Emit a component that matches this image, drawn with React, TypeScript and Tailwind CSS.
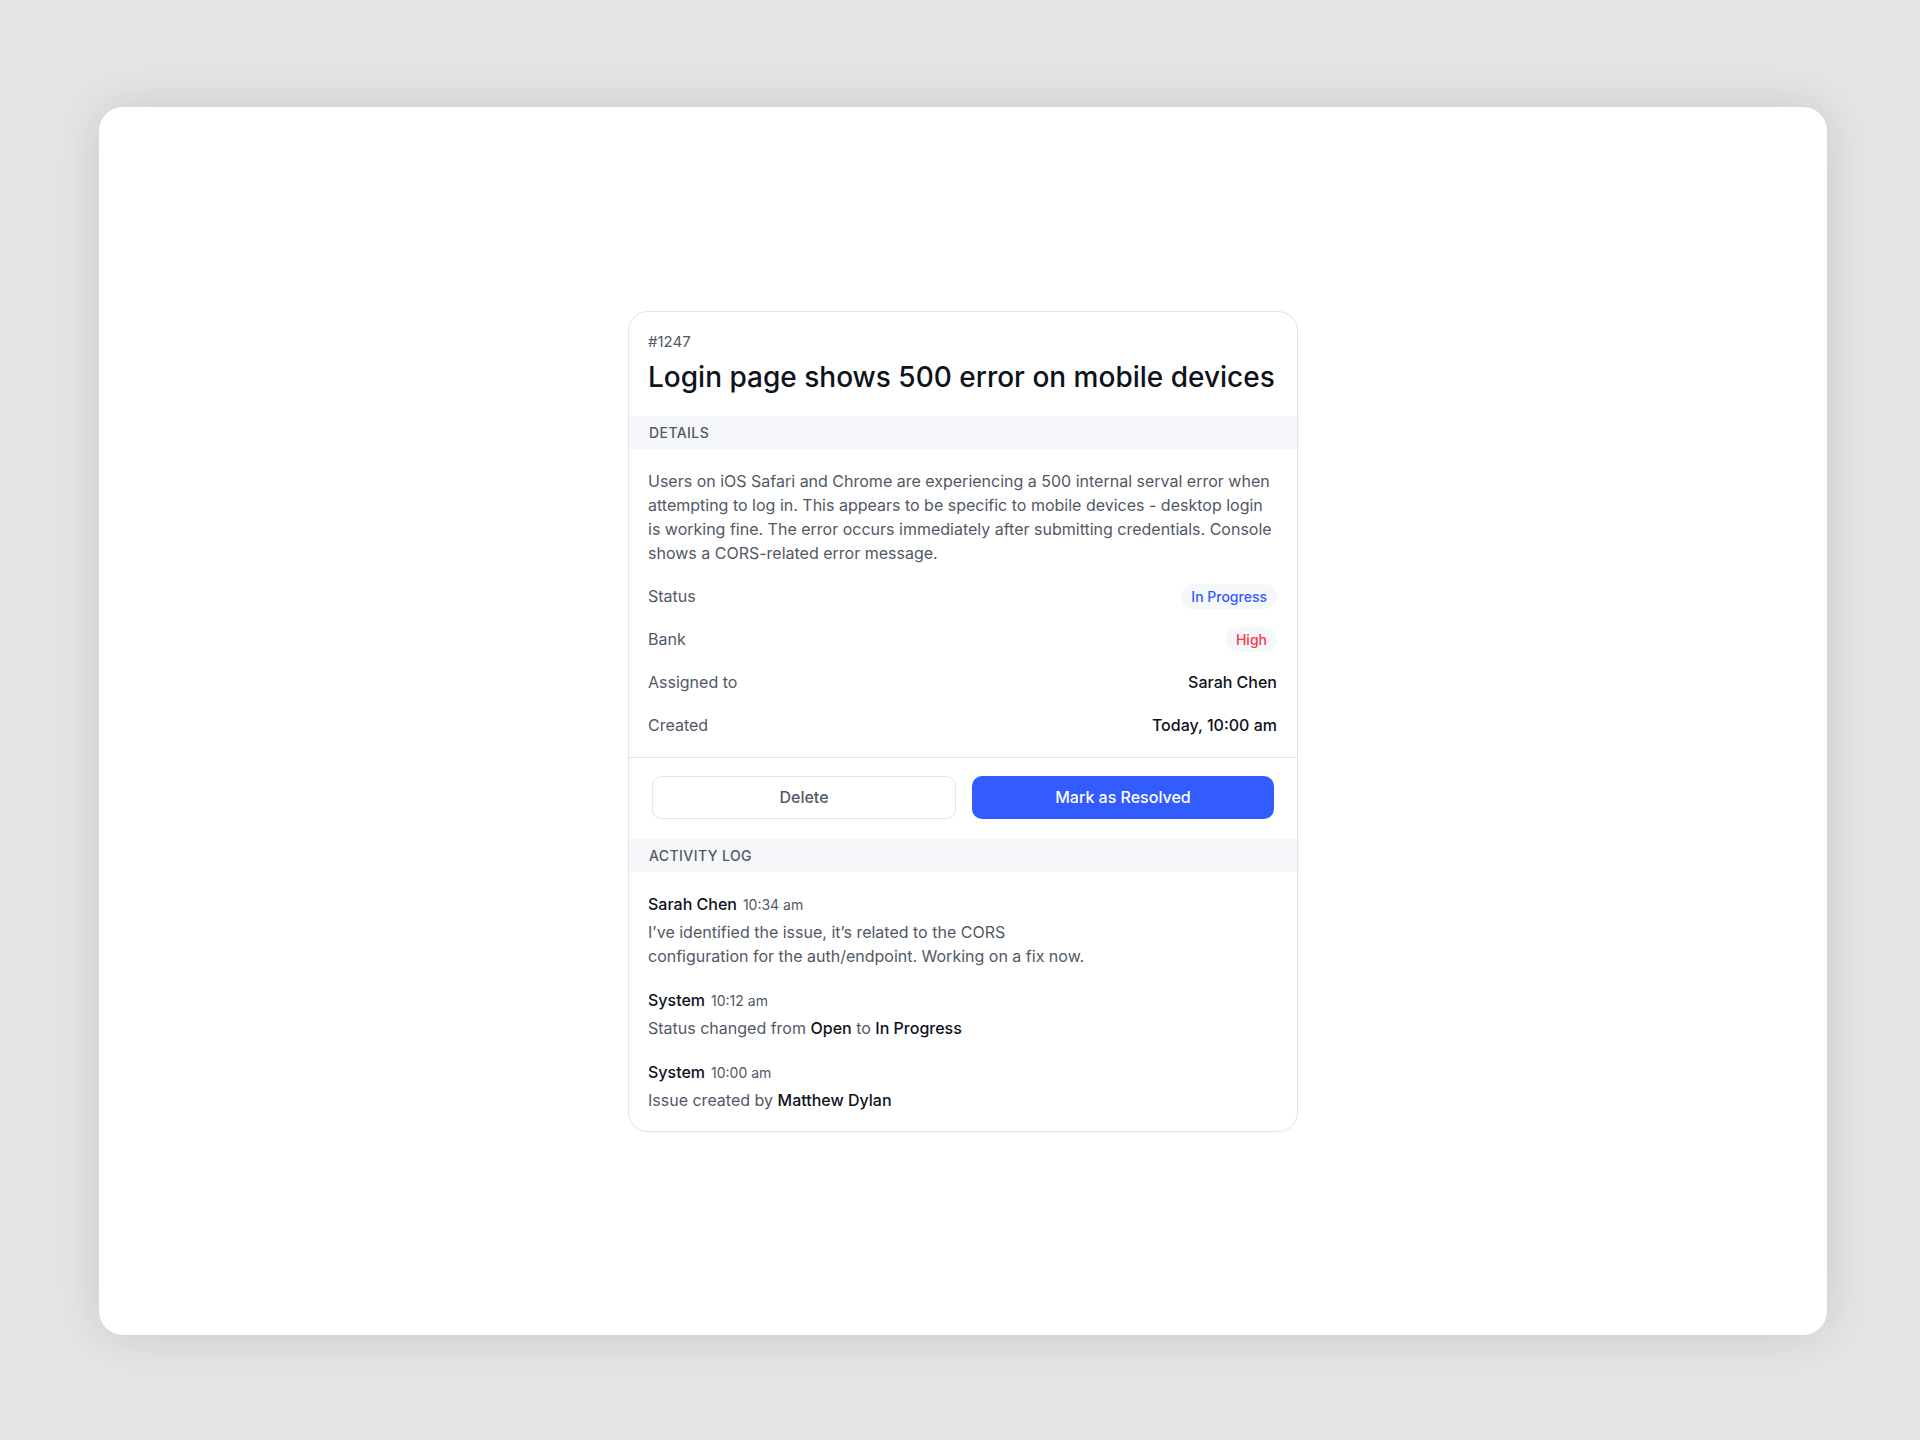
import React from "react";

const font = { fontFamily: "Inter, 'Noto Sans', sans-serif" };

function Row({ label, children }: { label: string; children: React.ReactNode }) {
  return (
    <div className="flex h-[43px] items-center justify-between">
      <span className="text-[16px] text-[#525866]">{label}</span>
      {children}
    </div>
  );
}

function Band({ children }: { children: React.ReactNode }) {
  return (
    <div className="flex h-[33px] items-center bg-[#F5F7FA] px-5 text-[14px] font-medium uppercase tracking-[0.03em] text-[#525866]">
      {children}
    </div>
  );
}

function Entry({ name, time, children }: { name: string; time: string; children: React.ReactNode }) {
  return (
    <div className="flex flex-col gap-1">
      <div className="flex h-6 items-baseline gap-[6px] overflow-visible">
        <span className="text-[16px] font-medium leading-6 text-[#0E121B]">{name}</span>
        <span className="text-[14px] leading-5 text-[#525866]">{time}</span>
      </div>
      <div className="text-[16px] leading-6 text-[#525866]">{children}</div>
    </div>
  );
}

export default function App() {
  return (
    <div className="min-h-screen w-full bg-[#e5e5e5] pl-[99px] pt-[107px]" style={font}>
      <div className="flex h-[1228px] w-[1728px] items-center justify-center rounded-[24px] bg-white shadow-[0_0_48px_rgba(0,0,0,0.13)]">
        <div className="w-[670px] overflow-hidden rounded-[20px] border border-[#E1E4EA] bg-white shadow-[0_1px_2px_rgba(10,13,20,0.03)]">
          <div className="pb-[22px] pl-[19px] pr-5 pt-5">
            <div className="text-[15px] leading-5 text-[#525866]">#1247</div>
            <h1 className="mt-2 text-[28px] font-medium leading-[34px] text-[#0E121B]">
              Login page shows 500 error on mobile devices
            </h1>
          </div>
          <Band>Details</Band>
          <div className="border-b border-[#E1E4EA] pb-[10px] pl-[19px] pr-5 pt-5">
            <p className="text-[16px] leading-6 text-[#525866]">
              Users on iOS Safari and Chrome are experiencing a 500 internal serval error when attempting to log in. This
              appears to be specific to mobile devices - desktop login is working fine. The error occurs immediately after
              submitting credentials. Console shows a CORS-related error message.
            </p>
            <div className="mt-[10px] flex flex-col">
              <Row label="Status">
                <span className="flex h-[25px] items-center rounded-full bg-[#F5F7FA] px-[10px] text-[14px] font-medium text-[#335CFF]">
                  In Progress
                </span>
              </Row>
              <Row label="Bank">
                <span className="flex h-[25px] items-center rounded-full bg-[#F5F7FA] px-[10px] text-[14px] font-medium text-[#FB3748]">
                  High
                </span>
              </Row>
              <Row label="Assigned to">
                <span className="text-[16px] font-medium text-[#0E121B]">Sarah Chen</span>
              </Row>
              <Row label="Created">
                <span className="text-[16px] font-medium text-[#0E121B]">Today, 10:00 am</span>
              </Row>
            </div>
          </div>
          <div className="flex gap-4 px-[23px] pb-5 pt-[18px]">
            <button className="flex h-[43px] flex-1 items-center justify-center rounded-[10px] border border-[#E1E4EA] bg-white text-[16px] font-medium text-[#525866] shadow-[0_1px_2px_rgba(10,13,20,0.03)]">
              Delete
            </button>
            <button className="flex h-[43px] flex-1 items-center justify-center rounded-[10px] bg-[#335CFF] text-[16px] font-medium text-white">
              Mark as Resolved
            </button>
          </div>
          <Band>Activity Log</Band>
          <div className="flex flex-col gap-5 pb-[19px] pl-[19px] pr-5 pt-5">
            <Entry name="Sarah Chen" time="10:34 am">
              I’ve identified the issue, it’s related to the CORS
              <br />
              configuration for the auth/endpoint. Working on a fix now.
            </Entry>
            <Entry name="System" time="10:12 am">
              Status changed from <span className="font-medium text-[#0E121B]">Open</span> to{" "}
              <span className="font-medium text-[#0E121B]">In Progress</span>
            </Entry>
            <Entry name="System" time="10:00 am">
              Issue created by <span className="font-medium text-[#0E121B]">Matthew Dylan</span>
            </Entry>
          </div>
        </div>
      </div>
    </div>
  );
}
